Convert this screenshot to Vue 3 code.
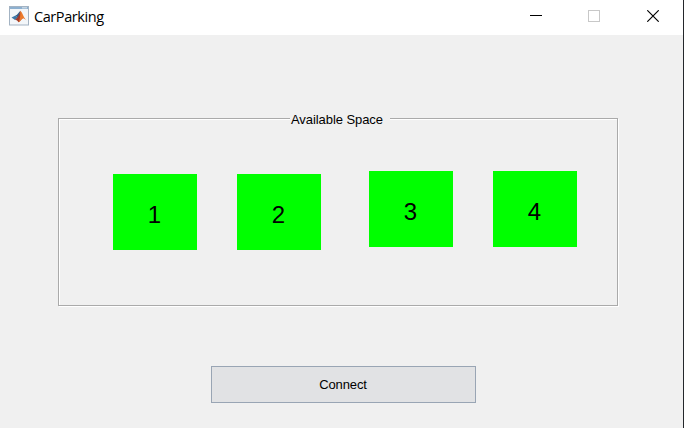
<script setup>
const groups = [
  { id: 'left', spaces: [1, 2] },
  { id: 'right', spaces: [3, 4] },
]
</script>

<template>
  <div class="window">
    <header class="titlebar">
      <svg class="logo" width="20" height="20" viewBox="0 0 20 20">
        <rect x="0.5" y="0.5" width="19" height="18.5" fill="#f3f6f9" stroke="#a3b3c3" />
        <rect x="1" y="1" width="18" height="2" fill="#8db0d0" />
        <rect x="13" y="1" width="5" height="1.5" fill="#c4d4e2" />
        <path d="M2.5 11.5 L6.5 9.5 L9 11.8 L6 14 Z" fill="#3c78a8" />
        <path d="M6.5 9.5 C8.7 9 9.4 6.5 11.3 4.8 L10.5 9.5 L9 11.8 Z" fill="#325f88" />
        <path d="M11.3 4.8 C10.5 8 9.5 11 6 14 C8 13.6 8.7 15 9.5 16.2 C11.5 15.5 12 12.8 13.7 12.4 Z" fill="#a33a28" />
        <path d="M11.3 4.8 C13.2 6 14.5 11.5 17.6 14.6 C15.8 13.2 14.8 12.2 13.7 12.4 C12.2 12.8 11.5 15.5 9.5 16.2 C11.5 13.2 11.2 8 11.3 4.8 Z" fill="#ec7a2c" />
      </svg>
      <h1 class="title">CarParking</h1>
      <div class="controls">
        <svg width="12" height="12" viewBox="0 0 12 12" shape-rendering="crispEdges">
          <rect y="5" width="12" height="1" fill="#000" />
        </svg>
        <svg width="12" height="12" viewBox="0 0 12 12" shape-rendering="crispEdges">
          <rect x="0.5" y="0.5" width="11" height="11" fill="none" stroke="#c8c8c8" />
        </svg>
        <svg class="close" width="12" height="12" viewBox="0 0 12 12">
          <path d="M0.3 0.3 L11.7 11.7 M11.7 0.3 L0.3 11.7" stroke="#000" stroke-width="1.15" />
        </svg>
      </div>
    </header>
    <main class="content">
      <section class="panel">
        <h2 class="legend">Available Space</h2>
        <div class="lots">
          <div v-for="g in groups" :key="g.id" class="group" :class="g.id">
            <div v-for="n in g.spaces" :key="n" class="space">{{ n }}</div>
          </div>
        </div>
      </section>
      <button class="connect">Connect</button>
    </main>
  </div>
</template>

<style>
body {
  margin: 0;
  overflow: hidden;
}
</style>

<style scoped>
.window {
  box-sizing: border-box;
  width: 684px;
  height: 428px;
  display: flex;
  flex-direction: column;
  background: #f0f0f0;
  border-right: 1px solid #24272b;
  font-family: "Liberation Sans", Arial, sans-serif;
  color: #000;
}
.titlebar {
  box-sizing: border-box;
  height: 35px;
  display: flex;
  align-items: flex-start;
  padding: 6px 24px 0 9px;
  background: #fff;
}
.logo {
  flex: none;
}
.title {
  margin: 0 0 0 5px;
  font: 400 14.5px/21px "Open Sans", "Noto Sans", sans-serif;
  letter-spacing: -0.42px;
}
.controls {
  display: flex;
  gap: 46px;
  margin-left: auto;
  padding-top: 4px;
}
.close {
  margin-left: 1px;
}
.content {
  flex: 1;
  display: flex;
  flex-direction: column;
  padding: 83px 0 0 58px;
}
.panel {
  box-sizing: border-box;
  width: 560px;
  height: 188px;
  border: 1px solid #aaa;
  box-shadow: 1px 1px 0 #fff, inset 1px 1px 0 #fff;
}
.legend {
  box-sizing: border-box;
  width: 100px;
  height: 16px;
  margin: -8px 0 0 231px;
  padding-left: 1px;
  background: #f0f0f0;
  font-size: 13px;
  font-weight: 400;
  line-height: 17px;
  letter-spacing: -0.07px;
  white-space: nowrap;
}
.lots {
  display: flex;
  gap: 48px;
  padding: 44px 0 0 54px;
}
.group {
  display: flex;
  gap: 40px;
}
.left {
  padding-top: 3px;
}
.space {
  box-sizing: border-box;
  width: 84px;
  height: 76px;
  padding-right: 1px;
  background: #0f0;
  font-size: 24px;
  line-height: 82px;
  text-align: center;
}
.connect {
  width: 265px;
  height: 37px;
  margin: 60px 0 0 153px;
  padding: 0 1px 0 0;
  border: 1px solid #99a5b4;
  border-radius: 0;
  background: #e1e2e4;
  color: #000;
  font: 400 13px "Liberation Sans", Arial, sans-serif;
  letter-spacing: -0.1px;
}
</style>
